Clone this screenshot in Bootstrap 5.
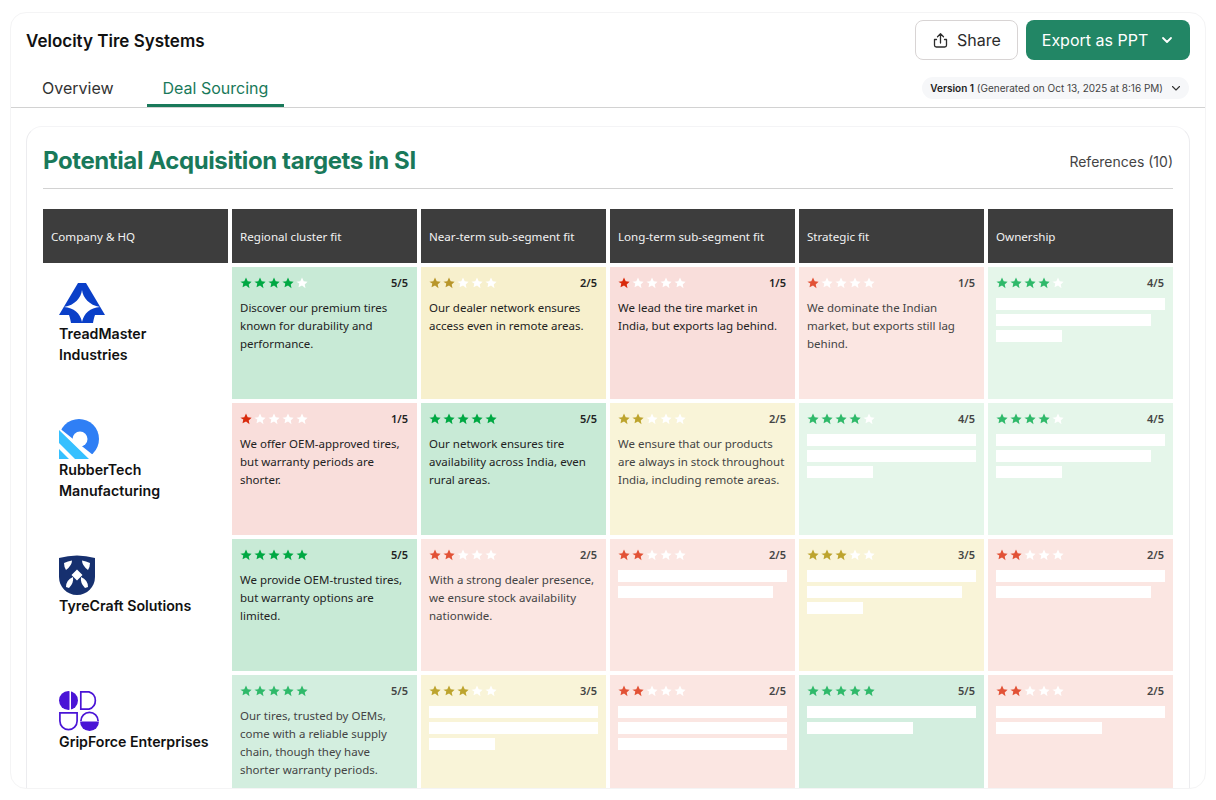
<!DOCTYPE html>
<html lang="en">

<head>
    <meta charset="UTF-8">
    <meta name="viewport" content="width=device-width, initial-scale=1.0">
    <link rel="stylesheet" href="https://cdn.jsdelivr.net/npm/bootstrap@5.3.1/dist/css/bootstrap.min.css">
    <title>Velocity Tire Systems</title>
    <style>
        html, body { height: 800px; overflow: hidden; background: #fff; }
        body { font-family: Inter, "Liberation Sans", sans-serif; color: #1a1a1a; }

        .shell { margin: 12px 10px 0; height: 777px; border: 1px solid #f4f4f5; border-radius: 16px; overflow: hidden; background: #fff; }
        .top-row { height: 58px; padding: 7px 15px 0 15px; }
        .app-title { margin-top: 9px; font-size: 17px; font-weight: 600; color: #111; }
        .btn-share { height: 40px; width: 103px; border: 1px solid #d8d4d4; border-radius: 8px; font-size: 16px; color: #2c2c2c; background: #fff; }
        .btn-export { height: 40px; width: 164px; border-radius: 8px; font-size: 16px; color: #fff; background: #228665; border: 0; }

        .tab-row { height: 37px; padding: 0 16px 0 15px; border-bottom: 1px solid #d2d2d2; }
        .tab-item { height: 36px; padding: 0 16px; font-size: 16px; color: #333; line-height: 34px; }
        .tab-on { margin-left: 17px; color: #19795a; border-bottom: 3px solid #19795a; }
        .version-pill { height: 22px; margin-top: 6px; padding: 0 8px; border-radius: 11px; background: #f6f7f9; font-size: 10px; color: #444; }
        .version-pill b { font-weight: 600; color: #222; }

        .inner-card { margin: 18px 15px 0; height: 700px; padding: 17px 16px 0; border: 1px solid #ececef; border-top-color: #f4f4f6; border-radius: 16px; }
        .head-row { height: 45px; border-bottom: 1px solid #d2d2d2; padding-bottom: 9px; }
        .page-head { font-size: 24px; font-weight: 700; color: #19795a; letter-spacing: -0.4px; margin: 0; }
        .refs { font-size: 14px; color: #444; }

        .target-grid { display: grid; grid-template-columns: repeat(6, 185px); grid-template-rows: 54px; grid-auto-rows: 132px; gap: 4px; margin-top: 20px; }
        .head-cell { padding: 0 8px; background: #3d3d3d; color: #f2f2f2; font: 400 11.6px "Noto Sans", sans-serif; }
        .company { padding: 16px 16px 0; font-size: 14.2px; font-weight: 600; line-height: 21px; color: #111; }
        .company svg { display: block; }

        .score-cell { padding: 9px 8px 0 8px; font: 400 11.5px/18px "Noto Sans", sans-serif; color: #222; }
        .score-cell p { margin: 9px 0 0; }
        .stars { height: 14px; }
        .stars svg { width: 12px; height: 12px; margin-right: 2px; display: block; }
        .score-num { font-size: 11px; font-weight: 600; line-height: 14px; margin-right: 1px; }
        .fill-bar { height: 12px; margin-bottom: 4px; background: #fff; }
        .first-bar { margin-top: 8px; }

        .tone-g { background: #c8ead6; --star: #00a843; }
        .tone-gf { background: #d3eedf; --star: #2fb96a; color: #444; }
        .tone-gl { background: #e5f6ea; --star: #2fb96a; color: #444; }
        .tone-y { background: #f7f0cd; --star: #b8962a; }
        .tone-yf { background: #f9f4d8; --star: #bda42e; color: #444; }
        .tone-r { background: #f9dedb; --star: #d92a0c; }
        .tone-rf { background: #fbe6e2; --star: #e25236; color: #444; }
        .star-on { fill: var(--star); }
        .star-off { fill: #fff; }
    </style>
</head>

<body>
    <div class="shell">
        <div class="top-row d-flex justify-content-between align-items-start">
            <div class="app-title">Velocity Tire Systems</div>
            <div class="d-flex gap-2">
                <button class="btn-share d-flex align-items-center justify-content-center gap-2">
                    <svg width="17" height="17" viewBox="0 0 17 17" fill="none" stroke="#2c2c2c" stroke-width="1.3" stroke-linecap="round" stroke-linejoin="round"><path d="M8.500 11V2M5.500 4.800 8.500 1.800l3 3M4.500 7.500H2.500v5.700c0 1 .8 1.800 1.800 1.800h8.400c1 0 1.800-.8 1.800-1.800V7.500h-2"/></svg>
                    Share
                </button>
                <button class="btn-export d-flex align-items-center justify-content-center gap-2">
                    Export as PPT
                    <svg class="ms-1" width="14" height="14" viewBox="0 0 14 14" fill="none" stroke="#fff" stroke-width="1.8" stroke-linecap="round" stroke-linejoin="round"><path d="M3 5l4 4 4-4"/></svg>
                </button>
            </div>
        </div>

        <div class="tab-row d-flex justify-content-between">
            <div class="d-flex">
                <div class="tab-item">Overview</div>
                <div class="tab-item tab-on">Deal Sourcing</div>
            </div>
            <div class="version-pill d-flex align-items-center gap-2">
                <span><b>Version 1</b> (Generated on Oct 13, 2025 at 8:16 PM)</span>
                <svg width="10" height="10" viewBox="0 0 10 10" fill="none" stroke="#333" stroke-width="1.1" stroke-linecap="round" stroke-linejoin="round"><path d="M1.500 3.500 5 7l3.500-3.500"/></svg>
            </div>
        </div>

        <div class="inner-card">
            <div class="head-row d-flex justify-content-between align-items-center">
                <h1 class="page-head">Potential Acquisition targets in SI</h1>
                <div class="refs">References (10)</div>
            </div>
            <div class="target-grid" id="targetGrid"></div>
        </div>
    </div>

    <script>
        var logos = {
            tread: '<svg width="46" height="40" viewBox="0 0 46 40"><path fill="#0a3fc8" d="M19 0h8l19 32H36c-1 3-1.500 5-2 8H12c-.5-3-1-5-2-8H0z"/><path fill="#fff" d="M23 7c1 8 7 15 18 17-10 1-16 6-18 15-2-9-8-14-18-15C16 22 22 15 23 7z"/></svg>',
            rubber: '<svg width="40" height="40" viewBox="0 0 40 40"><circle fill="#2f7ff5" cx="20" cy="20" r="20"/><path fill="#fff" d="M-1 8 34 36v5H-1z"/><circle fill="#fff" cx="21" cy="20" r="7.500"/><path fill="#36c0ff" d="M0 11 30 40H16L0 24zM0 30l10 10H0z"/></svg>',
            tyre: '<svg width="36" height="40" viewBox="0 0 36 40"><path fill="#16306f" d="M0 3Q18-2 36 3V22C36 32 28 40 18 40S0 32 0 22z"/><path fill="#fff" d="M5 8q4-2 8-2.500 0 5-6 9.500-2-3-2-7zM31 8q-4-2-8-2.500 0 5 6 9.500 2-3 2-7zM18 14.500l5.500 5.500-5.500 5.500-5.500-5.500zM7 32q0-7 7-10 1 6-4 11zM29 32q0-7-7-10-1 6 4 11z"/></svg>',
            grip: '<svg width="40" height="40" viewBox="0 0 40 40"><circle fill="#4a14d6" cx="9.500" cy="9.500" r="9.500"/><path fill="#fff" d="M10.500 0h1.500v19h-1.500z"/><path fill="none" stroke="#4a14d6" stroke-width="1.700" d="M21.800.9H30a9 9 0 0 1 0 17.200h-8.200zM.9 21.900h17.200V30A8.600 8.600 0 0 1 .9 30z"/><path fill="#4a14d6" d="M21 30.500h19a9.500 9.500 0 0 1-19 0z"/><path fill="none" stroke="#4a14d6" stroke-width="1.700" d="M21.900 30a8.600 8.600 0 0 1 17.200 0"/></svg>'
        };

        var headers = ['Company &amp; HQ', 'Regional cluster fit', 'Near-term sub-segment fit', 'Long-term sub-segment fit', 'Strategic fit', 'Ownership'];

        // tone, filled stars, score label, text or bar widths
        var rows = [
            { logo: 'tread', name: 'TreadMaster<br>Industries', cells: [
                ['g', 4, '5/5', 'Discover our premium tires known for durability and performance.'],
                ['y', 2, '2/5', 'Our dealer network ensures access even in remote areas.'],
                ['r', 1, '1/5', 'We lead the tire market in India, but exports lag behind.'],
                ['rf', 1, '1/5', 'We dominate the Indian market, but exports still lag behind.'],
                ['gl', 4, '4/5', [100, 92, 39]]
            ]},
            { logo: 'rubber', name: 'RubberTech<br>Manufacturing', cells: [
                ['r', 1, '1/5', 'We offer OEM-approved tires, but warranty periods are shorter.'],
                ['g', 5, '5/5', 'Our network ensures tire availability across India, even rural areas.'],
                ['yf', 2, '2/5', 'We ensure that our products are always in stock throughout India, including remote areas.'],
                ['gl', 4, '4/5', [100, 100, 39]],
                ['gl', 4, '4/5', [100, 92, 39]]
            ]},
            { logo: 'tyre', name: 'TyreCraft Solutions', cells: [
                ['g', 5, '5/5', 'We provide OEM-trusted tires, but warranty options are limited.'],
                ['rf', 2, '2/5', 'With a strong dealer presence, we ensure stock availability nationwide.'],
                ['rf', 2, '2/5', [100, 92]],
                ['yf', 3, '3/5', [100, 92, 33]],
                ['rf', 2, '2/5', [100, 92]]
            ]},
            { logo: 'grip', name: 'GripForce Enterprises', cells: [
                ['gf', 5, '5/5', 'Our tires, trusted by OEMs, come with a reliable supply chain, though they have shorter warranty periods.'],
                ['yf', 3, '3/5', [100, 100, 39]],
                ['rf', 2, '2/5', [100, 100, 100]],
                ['gf', 5, '5/5', [100, 63]],
                ['rf', 2, '2/5', [100, 63]]
            ]}
        ];

        var starPath = 'M6 .6l1.700 3.600 3.900.5-2.900 2.700.8 3.900L6 8.400l-3.500 1.900.8-3.900L.4 4.700l3.900-.5z';

        function starsHtml(count) {
            var html = '';
            for (var i = 1; i <= 5; i++) {
                html += '<svg viewBox="0 0 12 12"><path class="' + (i <= count ? 'star-on' : 'star-off') + '" d="' + starPath + '"/></svg>';
            }
            return html;
        }

        function cellHtml(cell) {
            var body = Array.isArray(cell[3])
                ? cell[3].map(function (w, i) {
                    return '<div class="fill-bar' + (i === 0 ? ' first-bar' : '') + '" style="width:' + w + '%"></div>';
                }).join('')
                : '<p>' + cell[3] + '</p>';
            return '<div class="score-cell tone-' + cell[0] + '">' +
                '<div class="stars d-flex justify-content-between align-items-center">' +
                '<div class="d-flex">' + starsHtml(cell[1]) + '</div>' +
                '<span class="score-num">' + cell[2] + '</span></div>' + body + '</div>';
        }

        document.getElementById('targetGrid').innerHTML =
            headers.map(function (h) {
                return '<div class="head-cell d-flex align-items-center">' + h + '</div>';
            }).join('') +
            rows.map(function (row) {
                return '<div class="company">' + logos[row.logo] + row.name + '</div>' + row.cells.map(cellHtml).join('');
            }).join('');
    </script>
</body>

</html>
